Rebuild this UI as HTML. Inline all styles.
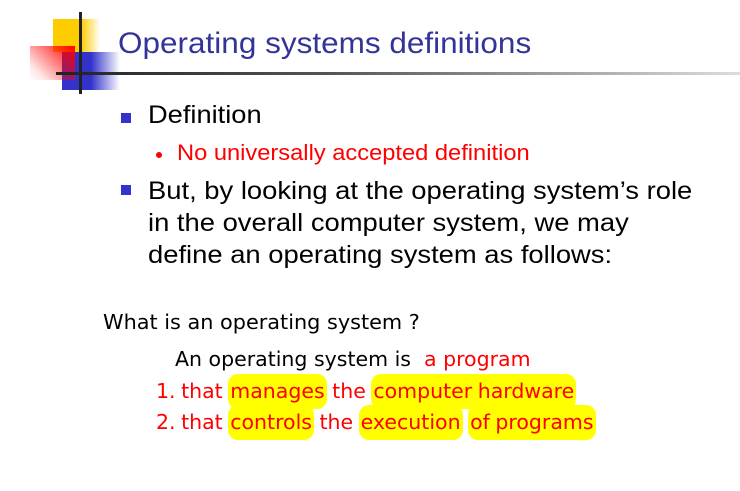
<!DOCTYPE html>
<html><head><meta charset="utf-8"><style>
body{margin:0;width:740px;height:491px;background:#fff;position:relative;overflow:hidden;font-family:"Liberation Sans",Arial,sans-serif}
.a{position:absolute;white-space:nowrap;transform-origin:0 0}
.t{font-family:"DejaVu Sans","Liberation Sans",sans-serif}
.h{background:#ffff00;border-radius:10px;padding:5px 2px 6px 2px}
.r{color:#ff0000}
.l{word-spacing:-1px}
</style></head><body>
<div class="a" style="left:53px;top:19px;width:47px;height:33px;background:linear-gradient(90deg,#ffcc00 60%,rgba(255,204,0,0))"></div>
<div class="a" style="left:62px;top:52px;width:58px;height:38px;background:linear-gradient(90deg,#3333cc 50%,rgba(51,51,204,0))"></div>
<div class="a" style="left:30px;top:46px;width:45px;height:34px;background:linear-gradient(225deg,#ff0000,rgba(255,0,0,0.1) 80%,rgba(255,255,255,0))"></div>
<div class="a" style="left:79px;top:12px;width:3px;height:82px;background:#222"></div>
<div class="a" style="left:56px;top:72px;width:684px;height:3px;background:linear-gradient(90deg,#222,#555 40%,#ddd)"></div>
<div class="a" style="left:118px;top:27px;font-size:30px;color:#333399;transform:scaleX(1.05)">Operating systems definitions</div>
<div class="a" style="left:121px;top:113px;width:10px;height:10px;background:#3333cc"></div>
<div class="a" style="left:148px;top:101px;font-size:25px;transform:scaleX(1.09)">Definition</div>
<div class="a" style="left:156px;top:152px;width:6px;height:6px;border-radius:50%;background:#f00"></div>
<div class="a r" style="left:177px;top:140px;font-size:22px;transform:scaleX(1.076)">No universally accepted definition</div>
<div class="a" style="left:121px;top:185px;width:10px;height:10px;background:#3333cc"></div>
<div class="a" style="left:148px;top:175px;font-size:25px;line-height:32px;transform:scaleX(1.095)">But, by looking at the operating system’s role<br>in the overall computer system, we may<br>define an operating system as follows:</div>
<div class="a t" style="left:103px;top:310px;font-size:20px;transform:scaleX(1.04)">What is an operating system ?</div>
<div class="a t" style="left:175px;top:347px;font-size:20.5px">An operating system is <span class="r">&nbsp;a program</span></div>
<div class="a t r l" style="left:156px;top:379px;font-size:20.5px">1. that <span class="h">manages</span> the <span class="h">computer hardware</span></div>
<div class="a t r l" style="left:156px;top:410px;font-size:20.5px">2. that <span class="h">controls</span> the <span class="h">execution</span> <span class="h">of programs</span></div>
</body></html>
